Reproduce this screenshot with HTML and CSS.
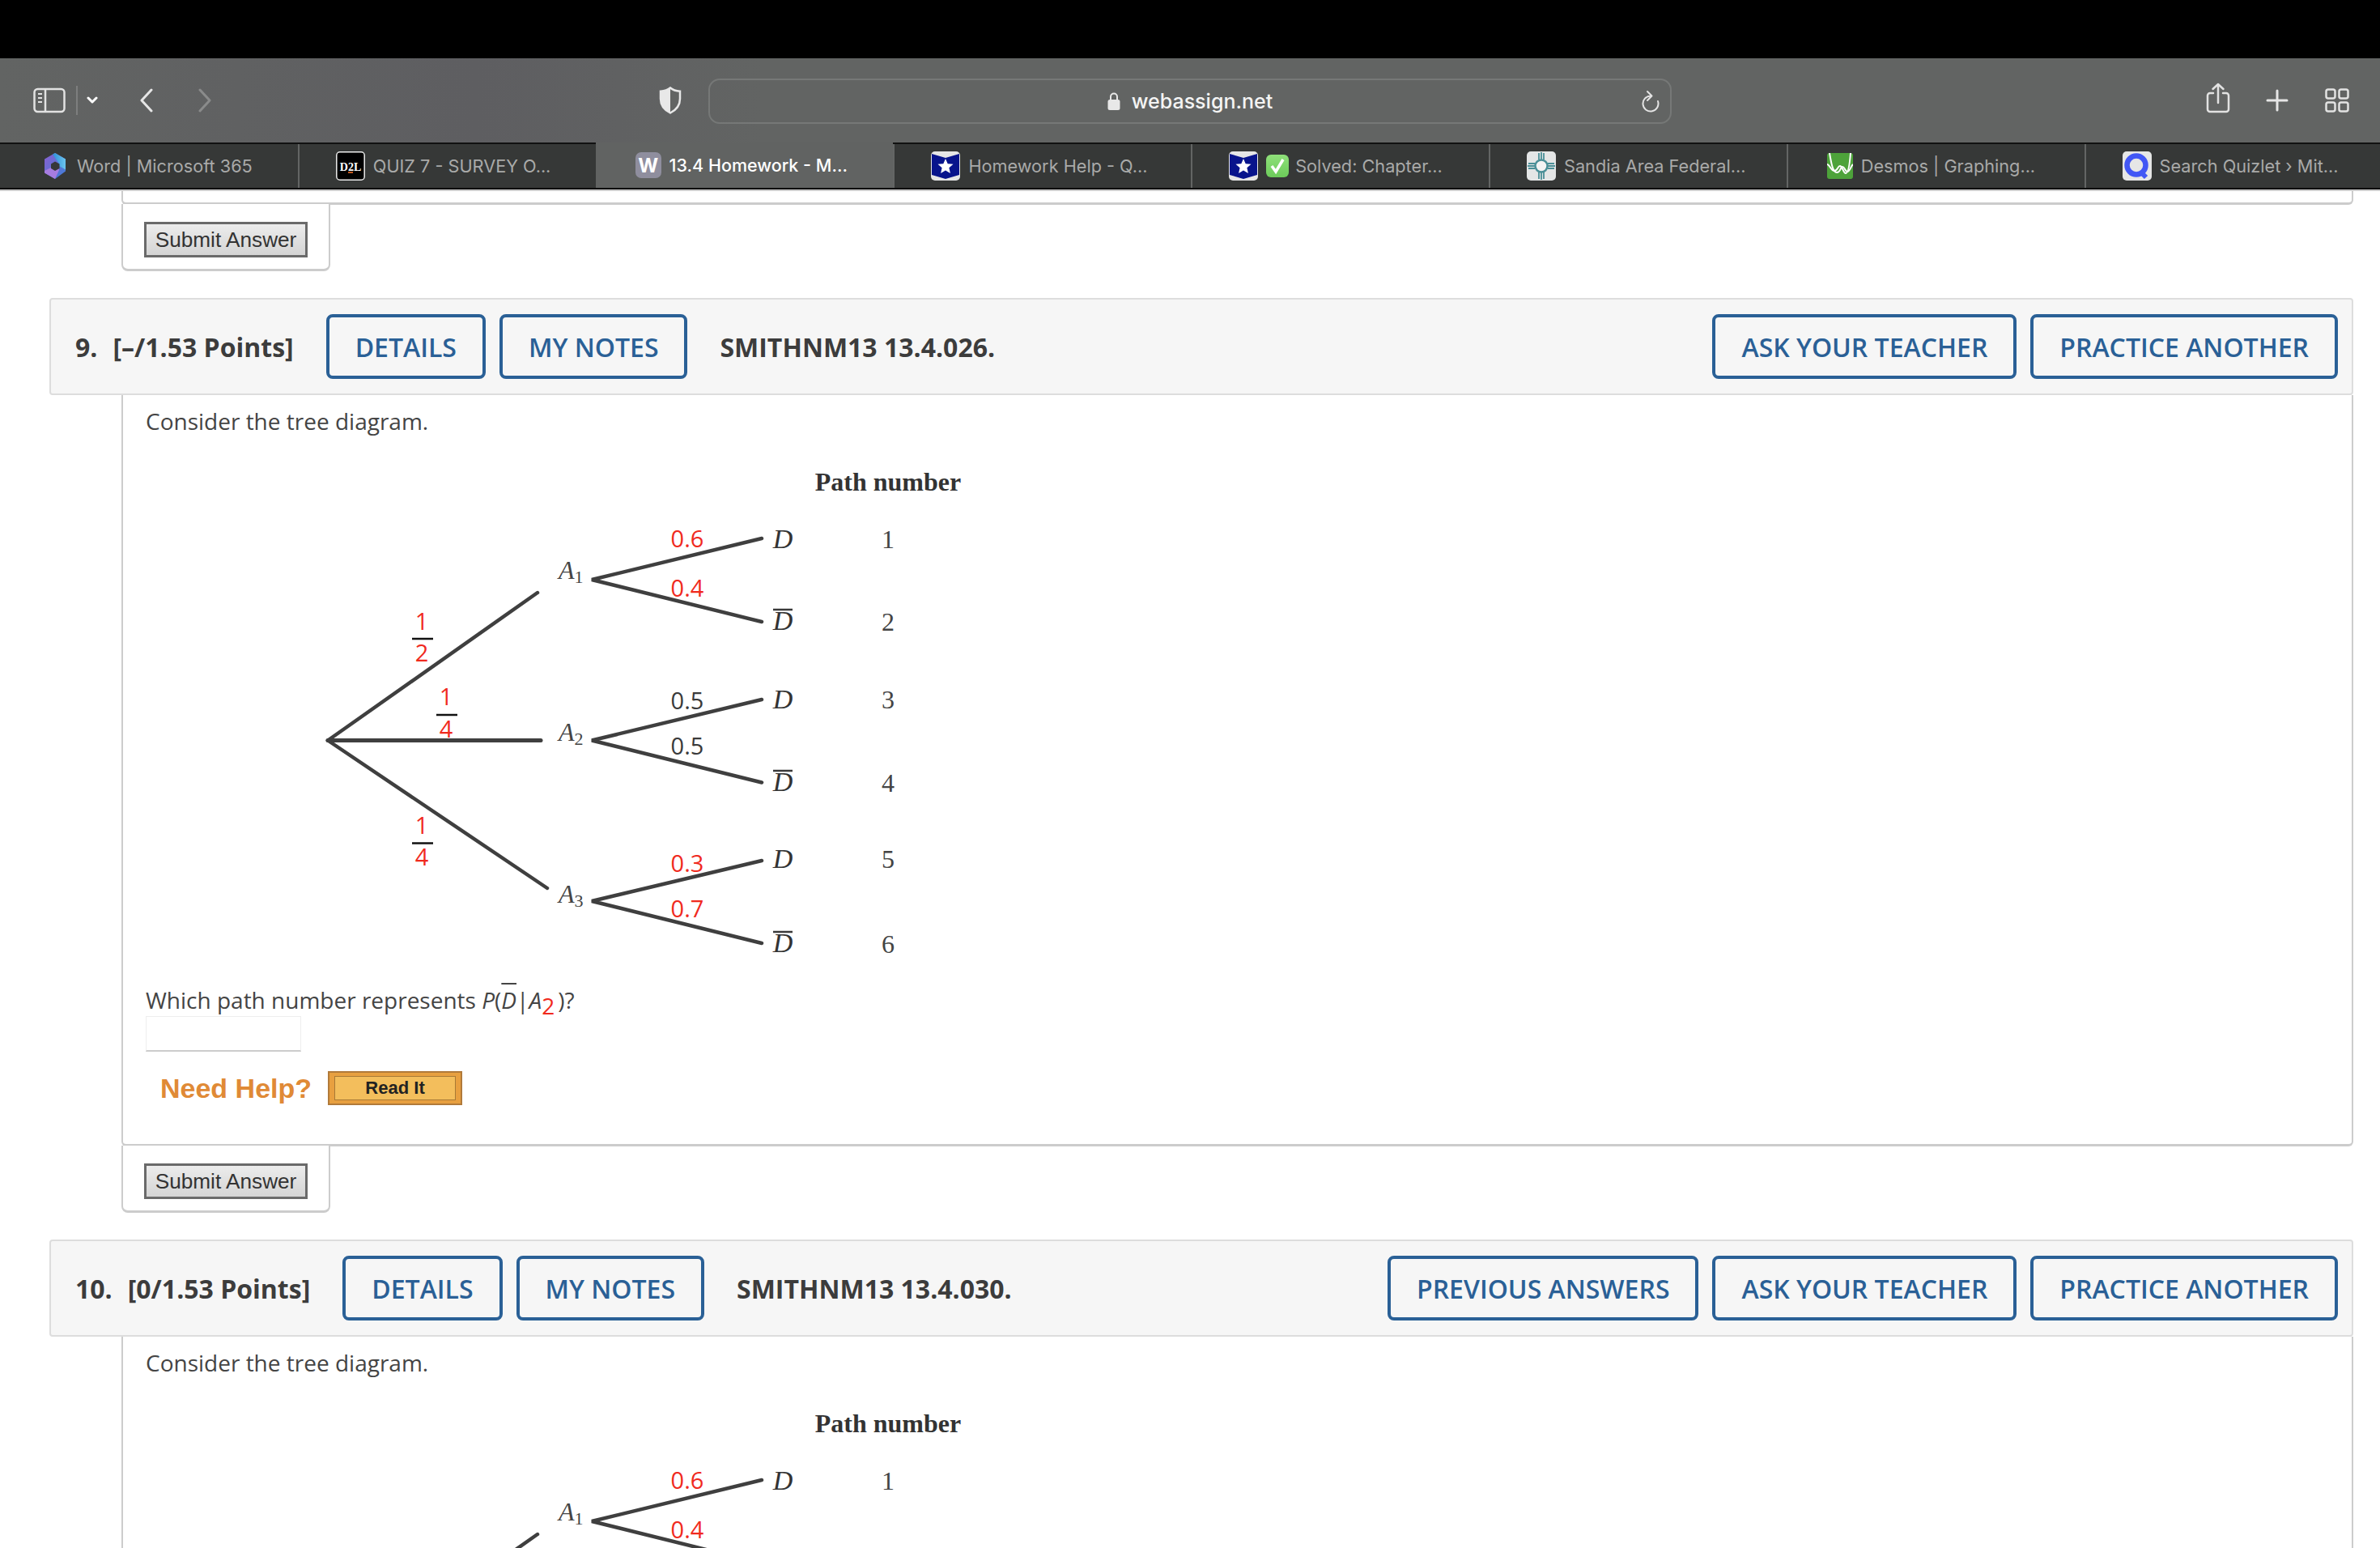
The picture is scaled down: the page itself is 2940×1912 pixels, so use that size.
FILE: index.html
```html
<!DOCTYPE html>
<html lang="en">
<head>
<meta charset="utf-8">
<title>13.4 Homework</title>
<link rel="stylesheet" href="styles.css">
</head>
<body>
<div class="screen">
  <div class="blackbar"></div>
  <header class="toolbar">
    <svg class="ic-sidebar" width="40" height="32" viewBox="0 0 40 32" fill="none" stroke="#e2e2e2" stroke-width="2.5"><rect x="1.5" y="2" width="37" height="28" rx="4"/><path d="M15 2v28"/><path d="M6 8h5M6 13h5M6 18h5" stroke-width="2"/></svg>
    <span class="sep"></span>
    <svg class="ic-chev" width="14" height="10" viewBox="0 0 14 10" fill="none" stroke="#fff" stroke-width="3" stroke-linecap="round" stroke-linejoin="round"><path d="M2 2l5 5 5-5"/></svg>
    <svg class="ic-back" width="18" height="30" viewBox="0 0 18 30" fill="none" stroke="#e6e6e6" stroke-width="3" stroke-linecap="round" stroke-linejoin="round"><path d="M15 2L3 15l12 13"/></svg>
    <svg class="ic-fwd" width="18" height="30" viewBox="0 0 18 30" fill="none" stroke="#8a8b8b" stroke-width="3" stroke-linecap="round" stroke-linejoin="round"><path d="M3 2l12 13L3 28"/></svg>
    <svg class="ic-shield" width="28" height="34" viewBox="0 0 28 34"><path d="M14 1.5c3 2.6 7.5 4 12 4.2V15c0 8-5 14-12 17.5C7 29 2 23 2 15V5.700c4.500-.2 9-1.600 12-4.200z" fill="#626463" stroke="#e8e8e8" stroke-width="2.500"/><path d="M14 1.500c-3 2.600-7.500 4-12 4.200V15c0 8 5 14 12 17.500z" fill="#e8e8e8"/></svg>
    <div class="address">
      <span></span>
      <span class="addr-mid">
        <svg width="16" height="24" viewBox="0 0 16 24"><path d="M4 11V6.500a4 4 0 0 1 8 0V11" fill="none" stroke="#e8e8e8" stroke-width="2"/><rect x="0.500" y="10" width="15" height="13" rx="2.500" fill="#e8e8e8"/></svg>
        <span class="addr-text">webassign.net</span>
      </span>
      <svg class="ic-reload" width="22" height="28" viewBox="0 0 22 28" fill="none" stroke="#e4e4e4" stroke-width="2" stroke-linecap="round" stroke-linejoin="round"><path d="M11 7.500A9.500 9.500 0 1 0 20 14"/><path d="M7 2l5.500 5.500L7 13"/></svg>
    </div>
    <svg class="ic-share" width="30" height="38" viewBox="0 0 30 38" fill="none" stroke="#e2e2e2" stroke-width="2.500" stroke-linecap="round" stroke-linejoin="round"><path d="M9 13H5a3 3 0 0 0-3 3v17a3 3 0 0 0 3 3h20a3 3 0 0 0 3-3V16a3 3 0 0 0-3-3h-4"/><path d="M15 25V2M8.500 8L15 2l6.500 6"/></svg>
    <svg class="ic-plus" width="28" height="28" viewBox="0 0 28 28" fill="none" stroke="#e6e6e6" stroke-width="3" stroke-linecap="round"><path d="M14 2v24M2 14h24"/></svg>
    <svg class="ic-grid" width="30" height="30" viewBox="0 0 30 30" fill="none" stroke="#e2e2e2" stroke-width="2.500"><rect x="1.500" y="1.500" width="11" height="11" rx="2.500"/><rect x="17.500" y="1.500" width="11" height="11" rx="2.500"/><rect x="1.500" y="17.500" width="11" height="11" rx="2.500"/><rect x="17.500" y="17.500" width="11" height="11" rx="2.500"/></svg>
  </header>

  <nav class="tabs">
    <div class="tab tab-word">
      <svg class="fav" width="30" height="32" viewBox="0 0 30 32"><defs><linearGradient id="w1" x1="0" y1="0" x2="1" y2="1"><stop offset="0" stop-color="#8a5fd0"/><stop offset="1" stop-color="#3d7fd8"/></linearGradient><linearGradient id="w2" x1="0" y1="0" x2="1" y2="0"><stop offset="0" stop-color="#2e8fd6"/><stop offset="1" stop-color="#6bc4ee"/></linearGradient></defs><path d="M15 0L28 7.500v15L15 32 2 24.500v-17z" fill="url(#w1)"/><path d="M12 1.700L15 0l13 7.500v13L20 16v-3z" fill="url(#w2)"/><path d="M2 22l8-4v-5l10 5v3l-5 11L2 24.500z" fill="#a77ce0"/><path d="M15 10.500l5.500 3v5.500L15 22l-5-3v-5.500z" fill="#363837"/></svg>
      <span>Word | Microsoft 365</span>
    </div>
    <div class="tab">
      <svg class="fav" width="36" height="36" viewBox="0 0 36 36"><rect x="0.800" y="0.800" width="34.400" height="34.400" rx="4" fill="#000" stroke="#ececec" stroke-width="1.500"/><text x="18" y="24" class="d2l">D2L</text><rect x="15" y="25" width="6" height="2" fill="#c25a20"/></svg>
      <span>QUIZ 7 - SURVEY O...</span>
    </div>
    <div class="tab tab-active">
      <span class="fav-w">W</span>
      <span>13.4 Homework - M...</span>
    </div>
    <div class="tab">
      <svg class="fav" width="36" height="36" viewBox="0 0 36 36"><rect width="36" height="36" rx="5" fill="#e6e6e6"/><path d="M1 3l17 5 17-5v26l-17 5-17-5z" fill="#08148c"/><path d="M18 9l2.700 6.200 6.800.6-5.100 4.500 1.500 6.600-5.900-3.500-5.900 3.500 1.500-6.600-5.100-4.500 6.800-.6z" fill="#fff"/></svg>
      <span>Homework Help - Q...</span>
    </div>
    <div class="tab">
      <svg class="fav" width="36" height="36" viewBox="0 0 36 36"><rect width="36" height="36" rx="5" fill="#e6e6e6"/><path d="M1 3l17 5 17-5v26l-17 5-17-5z" fill="#08148c"/><path d="M18 9l2.700 6.200 6.800.6-5.100 4.500 1.500 6.600-5.900-3.500-5.900 3.500 1.500-6.600-5.100-4.500 6.800-.6z" fill="#fff"/></svg>
      <svg class="fav-check" width="28" height="28" viewBox="0 0 28 28"><defs><linearGradient id="g1" x1="0" y1="0" x2="0" y2="1"><stop offset="0" stop-color="#8fe07a"/><stop offset="1" stop-color="#6ccb5a"/></linearGradient></defs><rect width="28" height="28" rx="6" fill="url(#g1)"/><path d="M7 14l5 7L21 6" fill="none" stroke="#fff" stroke-width="3.500"/></svg>
      <span>Solved: Chapter...</span>
    </div>
    <div class="tab">
      <svg class="fav" width="36" height="36" viewBox="0 0 36 36"><rect width="36" height="36" rx="5" fill="#e4e6e6"/><circle cx="18" cy="18" r="7.500" fill="#f3f3f3" stroke="#4a8f97" stroke-width="2.500"/><path d="M15 2v8M18 1v9M21 2v8M15 26v8M18 26v9M21 26v8M2 15h8M1 18h9M2 21h8M26 15h8M26 18h9M26 21h8" stroke="#4a8f97" stroke-width="1.800"/></svg>
      <span>Sandia Area Federal...</span>
    </div>
    <div class="tab tab-desmos">
      <svg class="fav" width="32" height="32" viewBox="0 0 32 32"><rect width="32" height="32" rx="3" fill="#4da33a"/><path d="M3 0c2 12 4 24 9 24s4-7 7-7 3 6 6 6 4-6 7-9" fill="none" stroke="#fff" stroke-width="2"/><path d="M0 14c3 0 5 8 9 8s4-6 7-6 4 9 7 9 5-12 6-25" fill="none" stroke="#fff" stroke-width="2"/></svg>
      <span>Desmos | Graphing...</span>
    </div>
    <div class="tab tab-quiz">
      <svg class="fav" width="36" height="36" viewBox="0 0 36 36"><rect width="36" height="36" rx="5" fill="#e6e6e6"/><circle cx="17" cy="17" r="11.500" fill="none" stroke="#4257f5" stroke-width="6.500"/><path d="M22 25l7 7" stroke="#4257f5" stroke-width="6"/></svg>
      <span>Search Quizlet › Mit...</span>
    </div>
  </nav>

  <main class="page">
    <div class="panel-tail"></div>
    <div class="submit-tab"><button class="submit">Submit Answer</button></div>

    <section class="q-head">
      <span class="q-num">9.</span>
      <span class="q-points">[–/1.53 Points]</span>
      <a class="q-btn">DETAILS</a>
      <a class="q-btn">MY NOTES</a>
      <span class="q-code">SMITHNM13 13.4.026.</span>
      <span class="q-right">
        <a class="q-btn">ASK YOUR TEACHER</a>
        <a class="q-btn">PRACTICE ANOTHER</a>
      </span>
    </section>
    <section class="q-body">
      <p class="q-text">Consider the tree diagram.</p>
      <svg class="tree" width="1100" height="640" viewBox="0 0 1100 640">
        <g class="lines">
          <path d="M225 355.500L484 173"/><path d="M225 355.500H488" class="thick"/><path d="M225 355.500L496 538"/>
          <path d="M761 106L551 157L761 209"/><path d="M761 305L551 355.500L761 407.500"/><path d="M761 504L551 554L761 606"/>
        </g>
        <text class="t-head" x="917" y="47">Path number</text>
        <text class="t-a" x="510" y="156">A<tspan class="t-sub" dy="5">1</tspan></text>
        <text class="t-a" x="510" y="356">A<tspan class="t-sub" dy="5">2</tspan></text>
        <text class="t-a" x="510" y="556">A<tspan class="t-sub" dy="5">3</tspan></text>
        <text class="t-d" x="787" y="118">D</text>
        <text class="t-d" x="787" y="219">D</text><path class="over" d="M775 194h24"/>
        <text class="t-d" x="787" y="316">D</text>
        <text class="t-d" x="787" y="418">D</text><path class="over" d="M775 393h24"/>
        <text class="t-d" x="787" y="513">D</text>
        <text class="t-d" x="787" y="617">D</text><path class="over" d="M775 592h24"/>
        <text class="t-n" x="917" y="118">1</text>
        <text class="t-n" x="917" y="220">2</text>
        <text class="t-n" x="917" y="316">3</text>
        <text class="t-n" x="917" y="419">4</text>
        <text class="t-n" x="917" y="513">5</text>
        <text class="t-n" x="917" y="618">6</text>
        <text class="t-v red" x="669" y="117">0.6</text>
        <text class="t-v red" x="669" y="178">0.4</text>
        <text class="t-v" x="669" y="317">0.5</text>
        <text class="t-v" x="669" y="373">0.5</text>
        <text class="t-v red" x="669" y="518">0.3</text>
        <text class="t-v red" x="669" y="574">0.7</text>
        <text class="t-v red" x="341" y="219">1</text><path class="bar" d="M329 230h26"/><text class="t-v red" x="341" y="258">2</text>
        <text class="t-v red" x="371" y="312">1</text><path class="bar" d="M359 324h26"/><text class="t-v red" x="371" y="352">4</text>
        <text class="t-v red" x="341" y="471">1</text><path class="bar" d="M329 482.500h26"/><text class="t-v red" x="341" y="510">4</text>
      </svg>
      <p class="q-ask">Which path number represents <i>P</i>(<i class="ovl">D</i>|<i>A</i><sub class="red-sub">2</sub>)?</p>
      <div class="answer"></div>
      <div class="help">
        <span class="need">Need Help?</span>
        <a class="readit"><span>Read It</span></a>
      </div>
    </section>
    <div class="submit-tab"><button class="submit">Submit Answer</button></div>

    <section class="q-head">
      <span class="q-num">10.</span>
      <span class="q-points">[0/1.53 Points]</span>
      <a class="q-btn">DETAILS</a>
      <a class="q-btn">MY NOTES</a>
      <span class="q-code">SMITHNM13 13.4.030.</span>
      <span class="q-right">
        <a class="q-btn">PREVIOUS ANSWERS</a>
        <a class="q-btn">ASK YOUR TEACHER</a>
        <a class="q-btn">PRACTICE ANOTHER</a>
      </span>
    </section>
    <section class="q-body">
      <p class="q-text">Consider the tree diagram.</p>
      <svg class="tree" width="1100" height="640" viewBox="0 0 1100 640">
        <g class="lines">
          <path d="M225 355.500L484 173"/>
          <path d="M761 106L551 157L761 209"/>
        </g>
        <text class="t-head" x="917" y="47">Path number</text>
        <text class="t-a" x="510" y="156">A<tspan class="t-sub" dy="5">1</tspan></text>
        <text class="t-d" x="787" y="118">D</text>
        <text class="t-n" x="917" y="118">1</text>
        <text class="t-v red" x="669" y="117">0.6</text>
        <text class="t-v red" x="669" y="178">0.4</text>
      </svg>
    </section>
  </main>
</div>
</body>
</html>
```
FILE: styles.css
```css
* { box-sizing: border-box; }
html, body { margin: 0; padding: 0; background: #fff; }
.screen { width: 2940px; height: 1912px; overflow: hidden; display: flex; flex-direction: column; font-family: "Open Sans", sans-serif; color: #3d3d3d; }

.blackbar { height: 72px; background: #000; flex: none; }

.toolbar { height: 104px; flex: none; display: flex; align-items: center; padding-left: 41px; background: linear-gradient(90deg, #626463 0%, #5e5e61 20%, #626463 32%, #626463 100%); }
.sep { width: 2px; height: 36px; background: #7d7e7e; margin-left: 13px; }
.ic-chev { margin-left: 11px; }
.ic-back { margin-left: 51px; }
.ic-fwd { margin-left: 54px; }
.ic-shield { margin-left: 552px; }
.address { width: 1190px; height: 56px; margin-left: 33px; margin-top: 2px; border: 2px solid #767877; border-radius: 14px; display: grid; grid-template-columns: 1fr auto 1fr; align-items: center; }
.addr-mid { display: flex; align-items: center; gap: 14px; }
.addr-text { font-family: Inter, sans-serif; font-size: 25px; font-weight: 500; color: #f4f4f4; }
.ic-reload { justify-self: end; margin-right: 13px; }
.ic-share { margin-left: 660px; margin-top: -6px; }
.ic-plus { margin-left: 44px; }
.ic-grid { margin-left: 45px; }

.tabs { height: 58px; flex: none; display: grid; grid-template-columns: repeat(7, 367.800px) 1fr; background: #363837; border-top: 2px solid #111; border-bottom: 2px solid #0c0c0c; font-family: Inter, sans-serif; font-size: 21.700px; color: #a9aaa9; }
.tab { display: flex; align-items: center; gap: 10px; padding-left: 45px; border-left: 2px solid #636564; min-width: 0; white-space: nowrap; }
.tab-word { padding-left: 53px; gap: 12px; border-left: 0; }
.tab-active { background: #616362; color: #fff; font-weight: 500; font-size: 21.500px; margin-top: -2px; border-left: 0; padding-left: 49px; }
.tab-desmos { padding-left: 48px; }
.tab-quiz { padding-left: 45px; }
.fav, .fav-check { flex: none; }
.fav-check + span { margin-left: -2px; }
.fav-w { width: 32px; height: 32px; border-radius: 7px; background: #8f8e9e; color: #fff; font-weight: 700; font-size: 24px; display: flex; align-items: center; justify-content: center; flex: none; }
.d2l { font-family: "Liberation Serif", serif; font-weight: 700; font-size: 14px; fill: #fff; text-anchor: middle; }

.page { flex: 1; min-height: 0; border-top: 2px solid #ccc; display: flex; flex-direction: column; background: #fff; }
.panel-tail { height: 17px; flex: none; margin: 0 33px 0 150px; border: 2px solid #ccc; border-width: 0 2px 3px 2px; border-radius: 0 0 6px 6px; }
.submit-tab { flex: none; width: 258px; height: 83px; margin-left: 150px; margin-top: -1px; padding: 22px 0 0 26px; background: #fff; border: 2px solid #ccc; border-top: 0; border-bottom-width: 3px; border-radius: 0 0 8px 8px; position: relative; }
.submit { display: block; width: 202px; height: 44px; padding: 0; border: 3px solid #6a6a6a; border-radius: 0; background: linear-gradient(#ececec, #d4d4d4); font-family: "Liberation Sans", sans-serif; font-size: 26.200px; color: #333; }

.q-head { flex: none; height: 120px; margin: 33px 33px 0 61px; padding: 0 17px 0 30px; display: flex; align-items: center; background: #f6f6f6; border: 2px solid #ddd; border-radius: 4px; font-weight: 700; font-size: 32px; color: #3c3c3c; }
.q-num { margin-right: 19px; }
.q-points { margin-right: 40px; }
.q-code { margin-left: 23px; }
.q-right { margin-left: auto; display: flex; gap: 17px; }
.q-btn { height: 80px; padding: 0 32px; display: flex; align-items: center; margin-right: 17px; border: 4px solid #2a6096; border-radius: 8px; color: #2a6096; font-weight: 600; font-size: 32px; white-space: nowrap; }
.q-right .q-btn { margin-right: 0; }

.q-body { flex: none; margin: 0 33px 0 150px; padding: 12px 28px 48px; border: 2px solid #ccc; border-top: 0; border-bottom-width: 3px; border-radius: 0 0 6px 6px; }
.q-text { margin: 0; font-size: 28px; line-height: 40px; color: #444; }
.tree { display: block; margin-top: 19px; margin-bottom: 18px; }
.lines path { fill: none; stroke: #3f3f3f; stroke-width: 4.500; stroke-linecap: round; }
.lines .thick { stroke-width: 5; }
.over { stroke: #3a3a3a; stroke-width: 2.500; fill: none; }
.bar { stroke: #111; stroke-width: 2.500; fill: none; }
.t-head { font-family: "Liberation Serif", serif; font-weight: 700; font-size: 32px; fill: #333; text-anchor: middle; }
.t-a { font-family: "Liberation Serif", serif; font-style: italic; font-size: 32px; fill: #444; }
.t-sub { font-style: normal; font-size: 22px; }
.t-d { font-family: "Liberation Serif", serif; font-style: italic; font-size: 34px; fill: #333; text-anchor: middle; }
.t-n { font-family: "Liberation Serif", serif; font-size: 32px; fill: #444; text-anchor: middle; }
.t-v { font-family: "Open Sans", sans-serif; font-size: 29px; fill: #3a3a3a; text-anchor: middle; }
.t-v.red { fill: #f02a1e; }
.q-ask { margin: 0; font-size: 28px; line-height: 36px; color: #444; }
.ovl { text-decoration: overline; }
.red-sub { color: #f02a1e; font-size: 28px; line-height: 0; margin-right: 4px; }
.answer { width: 192px; height: 44px; margin-top: 2px; border: 1px solid #eee; border-bottom: 2px solid #ccc; }
.help { display: flex; align-items: center; margin-top: 24px; padding-left: 18px; gap: 20px; }
.need { font-family: "Liberation Sans", sans-serif; font-weight: 700; font-size: 34px; color: #e08a36; }
.readit { width: 166px; height: 42px; padding: 4px 6px; background: #e8a040; border: 2px solid #b17a3a; display: flex; }
.readit span { flex: 1; display: flex; align-items: center; justify-content: center; background: #f3be5c; border: 1px solid #a87a36; font-family: "Liberation Sans", sans-serif; font-weight: 700; font-size: 22px; color: #222; }
```
